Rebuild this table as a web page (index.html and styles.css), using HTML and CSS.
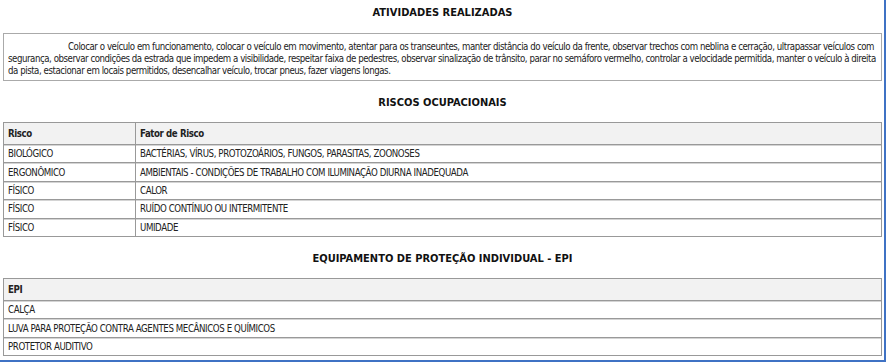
FILE: index.html
```html
<!DOCTYPE html>
<html lang="pt-BR">
<head>
  <meta charset="UTF-8">
  <title>Ordem de Serviço</title>
  <link rel="stylesheet" href="styles.css">
</head>
<body>
  <div id="frame">
    <div id="content">
      <h3 class="section-title first">ATIVIDADES REALIZADAS</h3>
      <div class="activities">
        <span class="line indent">Colocar o veículo em funcionamento, colocar o veículo em movimento, atentar para os transeuntes, manter distância do veículo da frente, observar trechos com neblina e cerração, ultrapassar veículos com</span>
        <span class="line">segurança, observar condições da estrada que impedem a visibilidade, respeitar faixa de pedestres, observar sinalização de trânsito, parar no semáforo vermelho, controlar a velocidade permitida, manter o veículo à direita</span>
        <span class="line last">da pista, estacionar em locais permitidos, desencalhar veículo, trocar pneus, fazer viagens longas.</span>
      </div>

      <h3 class="section-title">RISCOS OCUPACIONAIS</h3>
      <table class="grid">
        <tr>
          <th class="col-risk">Risco</th>
          <th>Fator de Risco</th>
        </tr>
        <tr><td>BIOLÓGICO</td><td>BACTÉRIAS, VÍRUS, PROTOZOÁRIOS, FUNGOS, PARASITAS, ZOONOSES</td></tr>
        <tr><td>ERGONÔMICO</td><td>AMBIENTAIS - CONDIÇÕES DE TRABALHO COM ILUMINAÇÃO DIURNA INADEQUADA</td></tr>
        <tr><td>FÍSICO</td><td>CALOR</td></tr>
        <tr><td>FÍSICO</td><td>RUÍDO CONTÍNUO OU INTERMITENTE</td></tr>
        <tr><td>FÍSICO</td><td>UMIDADE</td></tr>
      </table>

      <h3 class="section-title">EQUIPAMENTO DE PROTEÇÃO INDIVIDUAL - EPI</h3>
      <table class="grid">
        <tr><th>EPI</th></tr>
        <tr><td>CALÇA</td></tr>
        <tr><td>LUVA PARA PROTEÇÃO CONTRA AGENTES MECÂNICOS E QUÍMICOS</td></tr>
        <tr><td>PROTETOR AUDITIVO</td></tr>
      </table>
    </div>
  </div>
</body>
</html>
```

FILE: styles.css
```css
body, html {
  margin: 0;
  padding: 0;
  background-color: #fff;
  font-family: "DejaVu Sans Condensed", "DejaVu Sans", sans-serif;
  color: #222;
}
#frame {
  width: 884px;
  height: 360px;
  border-right: 2px solid #3f72c4;
  border-bottom: 2px solid #3f72c4;
  overflow: hidden;
}
#content {
  padding: 0 3px;
  width: 879px;
}
.section-title {
  margin: 0;
  padding: 15px 0 13px 0;
  line-height: 13px;
  text-align: center;
  font-size: 11px;
  font-weight: bold;
  color: #111;
}
.section-title.first {
  padding: 6px 0 14px 0;
}
.activities {
  border: 1px solid #aaa;
  padding: 7px 7px 3px 4px;
  font-size: 9.6px;
  letter-spacing: -0.45px;
  line-height: 12px;
}
.activities .line {
  display: block;
  white-space: nowrap;
  text-align: justify;
  text-align-last: justify;
}
.activities .line.indent {
  padding-left: 60px;
}
.activities .line.last {
  text-align-last: left;
}
.grid {
  width: 100%;
  border-collapse: separate;
  border-spacing: 0;
  border: 1px solid #999;
  font-size: 9.6px;
  letter-spacing: -0.4px;
}
.grid th {
  background-color: #f2f2f2;
  text-align: left;
  font-weight: bold;
  height: 21px;
  padding: 0 0 0 4px;
}
.grid td {
  height: 17.4px;
  padding: 0 0 0 4px;
  border-top: 1px solid #999;
  box-shadow: inset 0 1px 0 #d4d4d4;
}
.grid .col-risk {
  width: 127px;
  border-right: 1px solid #999;
}
.grid tr td:first-child:not(:last-child) {
  border-right: 1px solid #999;
}
```
